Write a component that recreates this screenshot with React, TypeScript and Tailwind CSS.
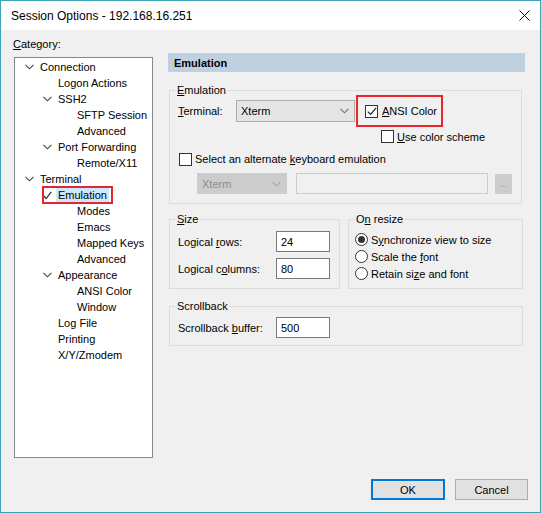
import React from 'react';

type Node = { label: string; level: number; icon?: 'chevron' | 'check'; selected?: boolean; key?: number };

const tree: Node[] = [
  { label: 'Connection', level: 0, icon: 'chevron' },
  { label: 'Logon Actions', level: 1 },
  { label: 'SSH2', level: 1, icon: 'chevron' },
  { label: 'SFTP Session', level: 2 },
  { label: 'Advanced', level: 2 },
  { label: 'Port Forwarding', level: 1, icon: 'chevron' },
  { label: 'Remote/X11', level: 2 },
  { label: 'Terminal', level: 0, icon: 'chevron' },
  { label: 'Emulation', level: 1, icon: 'check', selected: true },
  { label: 'Modes', level: 2 },
  { label: 'Emacs', level: 2 },
  { label: 'Mapped Keys', level: 2 },
  { label: 'Advanced', level: 2 },
  { label: 'Appearance', level: 1, icon: 'chevron' },
  { label: 'ANSI Color', level: 2 },
  { label: 'Window', level: 2 },
  { label: 'Log File', level: 1 },
  { label: 'Printing', level: 1 },
  { label: 'X/Y/Zmodem', level: 1 },
];

const levelPad = ['pl-[8px]', 'pl-[26px]', 'pl-[45px]'];

const Chevron = ({ color = '#505050' }: { color?: string }) => (
  <svg width="9" height="6" viewBox="0 0 9 6" fill="none">
    <path d="M0.5 0.8 L4.5 4.8 L8.5 0.8" stroke={color} strokeWidth="1.1" />
  </svg>
);

const TreeRow = ({ node }: { node: Node }) => (
  <div className={`relative flex h-[16px] items-center ${levelPad[node.level]}`}>
    <span className="flex w-[17px] shrink-0 items-center pl-[2px]">
      {node.icon === 'chevron' && <Chevron color="#444" />}
      {node.icon === 'check' && (
        <svg width="9" height="9" viewBox="0 0 9 9" fill="none">
          <path d="M0.8 5 L3.2 7.6 L8.2 0.8" stroke="#333" strokeWidth="1.3" />
        </svg>
      )}
    </span>
    {node.selected ? (
      <span className="-ml-[2px] bg-[#cce8ff] px-[2px] leading-[14px]">{node.label}</span>
    ) : (
      <span>{node.label}</span>
    )}
    {node.selected && (
      <span className="absolute left-[27px] top-[-1px] h-[18px] w-[71px] border-2 border-[#e5262d]" />
    )}
  </div>
);

const Check = ({ checked = false }: { checked?: boolean }) => (
  <span className="flex h-[13px] w-[13px] shrink-0 items-center justify-center border border-[#333] bg-white">
    {checked && (
      <svg width="10" height="9" viewBox="0 0 10 9" fill="none">
        <path d="M0.8 4.6 L3.6 7.4 L9.2 0.8" stroke="#222" strokeWidth="1.2" />
      </svg>
    )}
  </span>
);

const Radio = ({ checked = false }: { checked?: boolean }) => (
  <span className="flex h-[13px] w-[13px] shrink-0 items-center justify-center rounded-full border border-[#333] bg-white">
    {checked && <span className="h-[7px] w-[7px] rounded-full bg-[#333]" />}
  </span>
);

const TextBox = ({ value, w = 'w-[54px]' }: { value: string; w?: string }) => (
  <div className={`flex h-[21px] ${w} items-center border border-[#7a7a7a] bg-white pl-[4px]`}>{value}</div>
);

export default function App() {
  return (
    <div className="flex h-[513px] w-[541px] flex-col border border-[#3aa3b6] bg-[#f0f0f0] font-['Liberation_Sans',Arial,sans-serif] text-[11px] leading-[12px] text-black">
      {/* title bar */}
      <div className="flex h-[29px] shrink-0 items-center justify-between bg-white pl-[10px] pr-[10px]">
        <span className="text-[12px]">Session Options - 192.168.16.251</span>
        <svg width="11" height="11" viewBox="0 0 11 11" fill="none">
          <path d="M0.5 0.5 L10.5 10.5 M10.5 0.5 L0.5 10.5" stroke="#111" strokeWidth="1" />
        </svg>
      </div>

      <div className="flex flex-1 flex-col">
        <div className="flex">
          {/* category tree */}
          <div className="pl-[12px] pt-[6px]">
            <div className="h-[16px] leading-[16px]">
              <u>C</u>ategory:
            </div>
            <div className="ml-[1px] mt-[5px] h-[401px] w-[139px] border border-[#828790] bg-white pt-[1px]">
              {tree.map((n, i) => (
                <TreeRow key={i} node={n} />
              ))}
            </div>
          </div>

          {/* right panel */}
          <div className="ml-[15px] w-[357px] pt-[23px]">
            <div className="flex h-[19px] items-center bg-[#bfd0e0] pl-[6px] font-bold">Emulation</div>

            <fieldset className="ml-[1px] mt-[12px] h-[120px] w-[353px] border border-[#dcdcdc]">
              <legend className="ml-[6px] px-[1px] leading-[12px]">
                <u>E</u>mulation
              </legend>
              <div className="-mt-[1px] flex h-[32px] items-center pl-[8px]">
                <span className="w-[58px]">
                  <u>T</u>erminal:
                </span>
                <div className="flex h-[22px] w-[119px] items-center justify-between border border-[#adadad] bg-[#e5e5e5] pl-[4px] pr-[5px]">
                  <span>Xterm</span>
                  <Chevron color="#707070" />
                </div>
                <div className="ml-[1px] flex h-[32px] w-[87px] items-center gap-[4px] border-2 border-[#e5262d] pl-[7px]">
                  <Check checked />
                  <span>
                    <u>A</u>NSI Color
                  </span>
                </div>
              </div>
              <div className="mt-[3px] flex h-[13px] items-center gap-[3px] pl-[211px]">
                <Check />
                <span>
                  <u>U</u>se color scheme
                </span>
              </div>
              <div className="mt-[9px] flex h-[14px] items-center gap-[3px] pl-[9px]">
                <Check />
                <span>
                  Select an alternate <u>k</u>eyboard emulation
                </span>
              </div>
              <div className="mt-[7px] flex h-[21px] items-center pl-[27px]">
                <div className="flex h-[21px] w-[90px] items-center justify-between border border-[#cccccc] bg-[#cccccc] pl-[4px] pr-[5px] text-[#8c8c8c]">
                  <span>Xterm</span>
                  <Chevron color="#a8a8a8" />
                </div>
                <div className="ml-[9px] h-[21px] w-[192px] border border-[#cccccc] bg-[#f0f0f0]" />
                <div className="ml-[7px] flex h-[20px] w-[17px] items-center justify-center border border-[#cccccc] bg-[#cccccc] text-[9px] text-[#9a9a9a]">
                  ...
                </div>
              </div>
            </fieldset>

            <div className="ml-[1px] mt-[9px] flex">
              <fieldset className="h-[76px] w-[171px] border border-[#dcdcdc]">
                <legend className="ml-[6px] px-[1px] leading-[12px]">
                  <u>S</u>ize
                </legend>
                <div className="mt-[6px] flex items-center pl-[8px]">
                  <span className="w-[98px]">
                    Logical <u>r</u>ows:
                  </span>
                  <TextBox value="24" />
                </div>
                <div className="mt-[6px] flex items-center pl-[8px]">
                  <span className="w-[98px]">
                    Logical c<u>o</u>lumns:
                  </span>
                  <TextBox value="80" />
                </div>
              </fieldset>
              <fieldset className="ml-[8px] h-[76px] w-[175px] border border-[#dcdcdc]">
                <legend className="ml-[6px] px-[1px] leading-[12px]">
                  O<u>n</u> resize
                </legend>
                <div className="mt-[6px] flex flex-col pl-[6px]">
                  <div className="flex h-[17px] items-center gap-[3px]">
                    <Radio checked />
                    <span>
                      S<u>y</u>nchronize view to size
                    </span>
                  </div>
                  <div className="flex h-[17px] items-center gap-[3px]">
                    <Radio />
                    <span>
                      Scale the <u>f</u>ont
                    </span>
                  </div>
                  <div className="flex h-[17px] items-center gap-[3px]">
                    <Radio />
                    <span>
                      Retain si<u>z</u>e and font
                    </span>
                  </div>
                </div>
              </fieldset>
            </div>

            <fieldset className="ml-[1px] mt-[11px] h-[46px] w-[354px] border border-[#dcdcdc]">
              <legend className="ml-[6px] px-[1px] leading-[12px]">Scrollback</legend>
              <div className="mt-[5px] flex items-center pl-[8px]">
                <span className="w-[98px]">
                  Scrollback <u>b</u>uffer:
                </span>
                <TextBox value="500" />
              </div>
            </fieldset>
          </div>
        </div>

        {/* buttons */}
        <div className="mt-auto flex justify-end gap-[10px] pb-[12px] pr-[12px]">
          <button className="h-[21px] w-[74px] border-2 border-[#0078d7] bg-[#e1e1e1]">OK</button>
          <button className="h-[21px] w-[73px] border border-[#adadad] bg-[#e1e1e1]">Cancel</button>
        </div>
      </div>
    </div>
  );
}
